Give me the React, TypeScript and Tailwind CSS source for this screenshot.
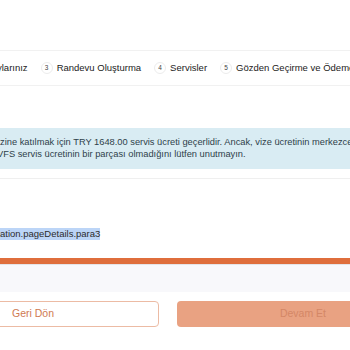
export default function App() {
  return (
    <div className="w-[350px] h-[350px] overflow-hidden bg-white font-['Liberation_Sans',Arial,sans-serif] text-[#333]">
      <div className="h-[50px]" />

      {/* STEPPER */}
      <div className="h-[36px] border-y border-[#f1f1f1] flex items-center whitespace-nowrap text-[9.5px] text-[#222]">
        <span className="-ml-[3px]">ylarınız</span>
        <Step n="3" label="Randevu Oluşturma" />
        <Step n="4" label="Servisler" />
        <Step n="5" label="Gözden Geçirme ve Ödeme" />
      </div>

      {/* INFO */}
      <div className="mt-[42px] h-[41px] bg-[#d9ecf3] pt-[8px] text-[9.3px] leading-[12px] text-[#2e3f4a] whitespace-nowrap">
        <div>zine katılmak için TRY 1648.00 servis ücreti geçerlidir. Ancak, vize ücretinin merkezce</div>
        <div className="-ml-[3px]">VFS servis ücretinin bir parçası olmadığını lütfen unutmayın.</div>
      </div>

      <div className="mt-[9px] border-t border-[#efefef]" />

      <div className="mt-[49px] h-[12px] flex items-center">
        <span className="bg-[#bcd5f7] text-[9.5px] leading-[12px] text-[#2c2c2c]">
          ation.pageDetails.para3
        </span>
      </div>

      <div className="mt-[18px] h-[6px] bg-[#df6e3c]" />
      <div className="h-[28px] bg-[#f8f8fb] border-t border-[#e4e4e8]" />

      {/* BUTTONS */}
      <div className="mt-[9px] flex gap-[18px] -ml-[93px]">
        <button className="w-[252px] h-[26px] shrink-0 rounded-[4px] border border-[#ecbba4] bg-white text-[10.5px] text-[#cf7a52]">
          Geri Dön
        </button>
        <button className="w-[252px] h-[26px] shrink-0 rounded-[4px] bg-[#e9a282] text-[10.5px] text-[#d48766]">
          Devam Et
        </button>
      </div>
    </div>
  );
}

function Step({ n, label }: { n: string; label: string }) {
  return (
    <div className="flex items-center ml-[13px] gap-[4px]">
      <span className="w-[12px] h-[12px] rounded-full border border-[#ececec] flex items-center justify-center text-[6.5px] text-[#444]">
        {n}
      </span>
      <span>{label}</span>
    </div>
  );
}
